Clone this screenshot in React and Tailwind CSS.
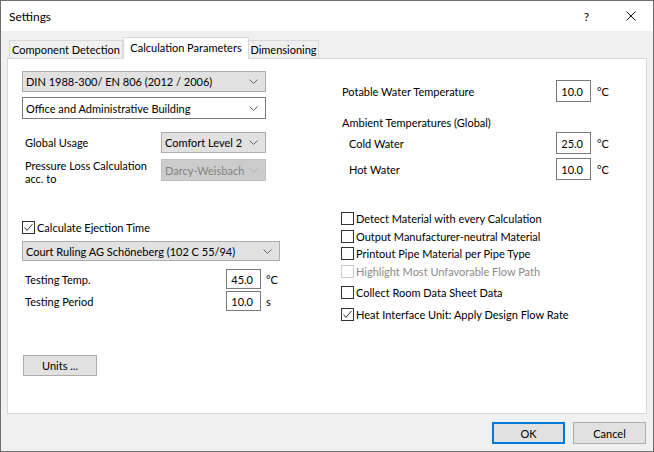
import React from "react";

const Chevron = ({ color = "#606060" }) => (
  <svg width="9" height="5" viewBox="0 0 9 5" className="shrink-0">
    <polyline points="0.5,0.5 4.5,4.5 8.5,0.5" fill="none" stroke={color} strokeWidth="1" />
  </svg>
);

function Combo({ text, className }) {
  return (
    <div className={`flex items-center justify-between pl-[3px] pr-[7px] border ${className}`}>
      <span className="whitespace-nowrap leading-none">{text}</span>
      <Chevron />
    </div>
  );
}

function NumBox({ value, h = "h-[22px]" }) {
  return (
    <div className={`w-[35px] ${h} border border-[#7a7a7a] bg-white flex items-center justify-end pr-[7px] leading-none`}>
      {value}
    </div>
  );
}

function Check({ label, checked, disabled, className = "" }) {
  return (
    <div className={`flex items-center h-[13px] ${className}`}>
      <div
        className={
          disabled
            ? "w-[13px] h-[13px] border border-[#cccccc] bg-white shrink-0"
            : "w-[13px] h-[13px] border border-[#333333] bg-white shrink-0"
        }
      >
        {checked && (
          <svg width="11" height="11" viewBox="0 0 11 11">
            <polyline points="1.5,5.5 4,8.5 9.5,2" fill="none" stroke="#333333" strokeWidth="1" />
          </svg>
        )}
      </div>
      <span className={disabled ? "ml-[2px] whitespace-nowrap text-[#8a8a8a]" : "ml-[2px] whitespace-nowrap"}>
        {label}
      </span>
    </div>
  );
}

export default function App() {
  return (
    <div className="w-[654px] h-[452px] bg-[#f0f0f0] border border-[#6e6e6e] flex flex-col font-['Lato',sans-serif] text-[11px] text-black leading-[13px]">
      {/* title bar */}
      <div className="h-[30px] bg-white flex items-center pl-[8px] pr-[17px] shrink-0">
        <span className="text-[12px]">Settings</span>
        <span className="ml-auto text-[12px]">?</span>
        <svg width="10" height="10" viewBox="0 0 10 10" className="ml-[37px]">
          <path d="M0.5 0.5 L9.5 9.5 M9.5 0.5 L0.5 9.5" stroke="#111" strokeWidth="1" />
        </svg>
      </div>

      <div className="flex flex-col px-[6px] pt-[6px]">
        {/* tabs */}
        <div className="flex items-end h-[21px] pl-[2px]">
          <div className="w-[114px] h-[18px] border border-b-0 border-[#d9d9d9] bg-[#f0f0f0] flex items-center justify-center whitespace-nowrap">
            Component Detection
          </div>
          <div className="w-[126px] h-[22px] mb-[-1px] border border-b-0 border-[#d9d9d9] bg-white relative z-10 flex items-center justify-center pb-[2px] whitespace-nowrap">
            Calculation Parameters
          </div>
          <div className="w-[70px] h-[18px] border border-b-0 border-l-0 border-[#d9d9d9] bg-[#f0f0f0] flex items-center justify-center whitespace-nowrap">
            Dimensioning
          </div>
        </div>

        {/* panel */}
        <div className="h-[356px] border border-[#d9d9d9] bg-white flex">
          {/* left column */}
          <div className="ml-[14px] mt-[12px] w-[258px] flex flex-col">
            <Combo text="DIN 1988-300/ EN 806 (2012 / 2006)" className="w-[244px] h-[21px] bg-[#e1e1e1] border-[#adadad]" />
            <Combo text="Office and Administrative Building" className="mt-[5px] w-[244px] h-[22px] bg-white border-[#7a7a7a]" />

            <div className="mt-[13px] flex items-center">
              <span className="pl-[3px] w-[139px]">Global Usage</span>
              <Combo text="Comfort Level 2" className="w-[105px] h-[21px] bg-[#e1e1e1] border-[#adadad]" />
            </div>
            <div className="mt-[6px] h-[22px] flex items-start">
              <span className="pl-[3px] w-[139px] h-[22px]">
                Pressure Loss Calculation
                <br />
                acc. to
              </span>
              <div className="w-[105px] h-[22px] bg-[#cccccc] border border-[#bfbfbf] flex items-center justify-between pl-[3px] pr-[7px] text-[#838383]">
                <span className="leading-none whitespace-nowrap">Darcy-Weisbach</span>
                <Chevron color="#b0b0b0" />
              </div>
            </div>

            <Check label="Calculate Ejection Time" checked className="mt-[40px]" />
            <Combo text="Court Ruling AG Schöneberg (102 C 55/94)" className="mt-[7px] w-[258px] h-[20px] bg-[#e1e1e1] border-[#adadad]" />

            <div className="mt-[8px] flex items-center">
              <span className="pl-[3px] w-[204px]">Testing Temp.</span>
              <NumBox value="45.0" h="h-[20px]" />
              <span className="ml-[5px]">°C</span>
            </div>
            <div className="mt-[2px] flex items-center">
              <span className="pl-[3px] w-[204px]">Testing Period</span>
              <NumBox value="10.0" h="h-[20px]" />
              <span className="ml-[5px]">s</span>
            </div>

            <div className="mt-[44px] ml-[1px] w-[74px] h-[21px] bg-[#e1e1e1] border border-[#adadad] flex items-center justify-center">
              Units ...
            </div>
          </div>

          {/* right column */}
          <div className="ml-[61px] mt-[21px] w-[270px] flex flex-col">
            <div className="flex items-center">
              <span className="pl-[1px] w-[215px]">Potable Water Temperature</span>
              <NumBox value="10.0" />
              <span className="ml-[6px]">°C</span>
            </div>
            <span className="mt-[14px] pl-[1px]">Ambient Temperatures (Global)</span>
            <div className="mt-[3px] flex items-center">
              <span className="pl-[8px] w-[215px]">Cold Water</span>
              <NumBox value="25.0" />
              <span className="ml-[6px]">°C</span>
            </div>
            <div className="mt-[4px] flex items-center">
              <span className="pl-[8px] w-[215px]">Hot Water</span>
              <NumBox value="10.0" />
              <span className="ml-[6px]">°C</span>
            </div>

            <Check label="Detect Material with every Calculation" className="mt-[32px]" />
            <Check label="Output Manufacturer-neutral Material" className="mt-[5px]" />
            <Check label="Printout Pipe Material per Pipe Type" className="mt-[4px]" />
            <Check label="Highlight Most Unfavorable Flow Path" disabled className="mt-[5px]" />
            <Check label="Collect Room Data Sheet Data" className="mt-[8px]" />
            <Check label="Heat Interface Unit: Apply Design Flow Rate" checked className="mt-[9px]" />
          </div>
        </div>
      </div>

      {/* dialog buttons */}
      <div className="mt-[8px] flex justify-end gap-[8px] pr-[7px]">
        <div className="w-[73px] h-[22px] bg-[#e1e1e1] border-2 border-[#0078d7] flex items-center justify-center">
          OK
        </div>
        <div className="w-[73px] h-[22px] bg-[#e1e1e1] border border-[#adadad] flex items-center justify-center">
          Cancel
        </div>
      </div>
    </div>
  );
}
